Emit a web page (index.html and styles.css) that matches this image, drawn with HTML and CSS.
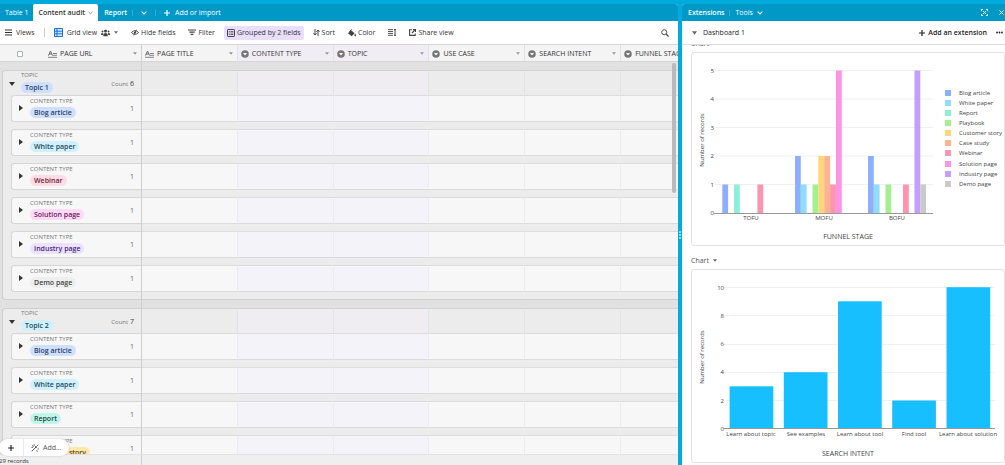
FILE: index.html
```html
<!DOCTYPE html>
<html lang="en">
<head>
    <meta charset="UTF-8">
    <meta name="viewport" content="width=device-width, initial-scale=1.0">
    <title>Content audit</title>
    <link rel="stylesheet" href="styles.css">
</head>
<body>
    <!-- shared icons -->
    <svg class="defs" width="0" height="0">
        <symbol id="i-text" viewBox="0 0 9 8"><path d="M.5 5.500 2.500 1l2 4.500M1.200 4h2.600" fill="none" stroke="#666" stroke-width="1"/><path d="M5 3.500h4M5 5.300h4M0 7.300h9" stroke="#777" stroke-width=".9"/></symbol>
        <symbol id="i-select" viewBox="0 0 8 8"><circle cx="4" cy="4" r="3.800" fill="#777"/><path d="M2 2.900h4L4 5.600z" fill="#fff"/></symbol>
        <symbol id="i-chev" viewBox="0 0 6 4"><path d="m.6.7 2.400 2.300L5.400.7" fill="none" stroke="currentColor" stroke-width="1.100"/></symbol>
        <symbol id="i-caret" viewBox="0 0 6 4"><path d="M0 0h6L3 4z" fill="currentColor"/></symbol>
        <symbol id="i-right" viewBox="0 0 4 6"><path d="M0 0v6l4-3z" fill="currentColor"/></symbol>
        <symbol id="i-plus" viewBox="0 0 6 6"><path d="M3 0v6M0 3h6" stroke="currentColor" stroke-width="1.200"/></symbol>
    </svg>

    <div class="app">
        <main class="base">
            <nav class="tabs">
                <a href="#" class="tab">Table 1</a>
                <a href="#" class="tab active">Content audit <svg class="chev small"><use href="#i-chev"/></svg></a>
                <a href="#" class="tab">Report</a>
                <button class="tab-btn" aria-label="All tables"><svg class="chev"><use href="#i-chev"/></svg></button>
                <button class="tab-btn"><svg class="plus"><use href="#i-plus"/></svg>Add or import</button>
            </nav>

            <div class="toolbar">
                <button class="views"><svg width="7" height="7"><path d="M0 1h7M0 3.500h7M0 6h7" stroke="#333" stroke-width="1.200"/></svg>Views</button>
                <span class="sep"></span>
                <button class="grid-view">
                    <svg width="9" height="9"><path d="M.5.5h8v8h-8zM.5 3.200h8M.5 5.800h8M3 .5v8" fill="#d3e6fb" stroke="#1875dc"/></svg>Grid view
                    <svg class="people" width="9" height="8"><g fill="#444"><circle cx="4.500" cy="2" r="1.500"/><circle cx="1.500" cy="2.600" r="1"/><circle cx="7.500" cy="2.600" r="1"/><path d="M2.300 7.200V5.600q0-1.500 2.200-1.500t2.200 1.500v1.600zM0 6V5q0-1 1.900-.9V6zM9 6V5q0-1-1.900-.9V6z"/></g></svg>
                    <svg class="caret"><use href="#i-caret"/></svg>
                </button>
                <button><svg width="8" height="7"><path d="M.4 3.500Q4-.2 7.600 3.500 4 7.200.4 3.500zM2.500 6.300l3-5.600" fill="none" stroke="#444" stroke-width=".9"/><circle cx="4" cy="3.500" r="1.100" fill="#444"/></svg>Hide fields</button>
                <button><svg width="8" height="7"><path d="M0 1h8M1.300 3.200h5.400M2.600 5.400h2.800" stroke="#444" stroke-width="1.200"/></svg>Filter</button>
                <button class="on"><svg width="8" height="8"><rect x=".5" y=".5" width="7" height="7" rx=".6" fill="none" stroke="#444"/><path d="M1.800 2.500h1M1.800 4h1M1.800 5.500h1M3.500 2.500h2.800M3.500 4h2.800M3.500 5.500h2.800" stroke="#444" stroke-width=".8"/></svg>Grouped by 2 fields</button>
                <button><svg width="7" height="7"><path d="M2 0v6M.3 4.200 2 6l1.700-1.800M5 7V1M3.300 2.800 5 1l1.700 1.800" fill="none" stroke="#444"/></svg>Sort</button>
                <button><svg width="8" height="8"><path d="m3 1.200 3.600 3-3 3L0 4.200z" fill="#444"/><path d="M1.500 2.700 3.700.4" stroke="#444"/><path d="M7.200 4.500q.8 1.300.8 1.900a.8.8 0 0 1-1.600 0q0-.6.8-1.900z" fill="#444"/></svg>Color</button>
                <button aria-label="Row height"><svg width="8" height="7"><path d="M0 .6h5M0 2.500h5M0 4.400h5M0 6.300h5" stroke="#444" stroke-width=".9"/><path d="M7 .5v6M6 .6h2M6 6.300h2" stroke="#444" fill="none"/></svg></button>
                <button><svg width="7" height="7"><path d="M3 .8H.6v5.600h5.600V4.500M4 .6h2.500V3M6.400.6 3 4" fill="none" stroke="#444" stroke-width="1.100"/></svg>Share view</button>
                <button class="search" aria-label="Search"><svg width="8" height="8"><circle cx="3.200" cy="3.200" r="2.500" fill="none" stroke="#555"/><path d="m5 5 2.600 2.600" stroke="#555" stroke-width="1.300"/></svg></button>
            </div>

            <div class="grid">
                <table>
                    <colgroup><col class="c-first"><col><col><col><col><col><col></colgroup>
                    <thead>
                        <tr>
                            <th><div class="head"><input type="checkbox" aria-label="Select all"><svg class="ti"><use href="#i-text"/></svg>PAGE URL<svg class="caret"><use href="#i-caret"/></svg></div></th>
                            <th><div class="head"><svg class="ti"><use href="#i-text"/></svg>PAGE TITLE<svg class="caret"><use href="#i-caret"/></svg></div></th>
                            <th class="tint"><div class="head"><svg class="si"><use href="#i-select"/></svg>CONTENT TYPE<svg class="caret"><use href="#i-caret"/></svg></div></th>
                            <th class="tint"><div class="head"><svg class="si"><use href="#i-select"/></svg>TOPIC<svg class="caret"><use href="#i-caret"/></svg></div></th>
                            <th><div class="head"><svg class="si"><use href="#i-select"/></svg>USE CASE<svg class="caret"><use href="#i-caret"/></svg></div></th>
                            <th><div class="head"><svg class="si"><use href="#i-select"/></svg>SEARCH INTENT<svg class="caret"><use href="#i-caret"/></svg></div></th>
                            <th><div class="head"><svg class="si"><use href="#i-select"/></svg>FUNNEL STAGE</div></th>
                        </tr>
                    </thead>
                    <tbody>
                        <tr class="space"><td></td><td colspan="6"></td></tr>
                        <tr class="topic">
                            <td><div class="group"><svg class="down"><use href="#i-caret"/></svg><div class="name"><small>TOPIC</small><span class="pill blue">Topic 1</span></div><span class="count"><small>Count</small> <b>6</b></span></div></td>
                            <td></td><td class="tint"></td><td class="tint"></td><td></td><td></td><td></td>
                        </tr>
                        <tr class="item">
                            <td><div class="rail"><div class="card"><svg class="right"><use href="#i-right"/></svg><div class="name"><small>CONTENT TYPE</small><span class="pill blue">Blog article</span></div><span class="count">1</span></div></div></td>
                            <td></td><td class="tint"></td><td class="tint"></td><td></td><td></td><td></td>
                        </tr>
                        <tr class="gap"><td><div class="rail"></div></td><td colspan="6"></td></tr>
                        <tr class="item">
                            <td><div class="rail"><div class="card"><svg class="right"><use href="#i-right"/></svg><div class="name"><small>CONTENT TYPE</small><span class="pill cyan">White paper</span></div><span class="count">1</span></div></div></td>
                            <td></td><td class="tint"></td><td class="tint"></td><td></td><td></td><td></td>
                        </tr>
                        <tr class="gap"><td><div class="rail"></div></td><td colspan="6"></td></tr>
                        <tr class="item">
                            <td><div class="rail"><div class="card"><svg class="right"><use href="#i-right"/></svg><div class="name"><small>CONTENT TYPE</small><span class="pill red">Webinar</span></div><span class="count">1</span></div></div></td>
                            <td></td><td class="tint"></td><td class="tint"></td><td></td><td></td><td></td>
                        </tr>
                        <tr class="gap"><td><div class="rail"></div></td><td colspan="6"></td></tr>
                        <tr class="item">
                            <td><div class="rail"><div class="card"><svg class="right"><use href="#i-right"/></svg><div class="name"><small>CONTENT TYPE</small><span class="pill pink">Solution page</span></div><span class="count">1</span></div></div></td>
                            <td></td><td class="tint"></td><td class="tint"></td><td></td><td></td><td></td>
                        </tr>
                        <tr class="gap"><td><div class="rail"></div></td><td colspan="6"></td></tr>
                        <tr class="item">
                            <td><div class="rail"><div class="card"><svg class="right"><use href="#i-right"/></svg><div class="name"><small>CONTENT TYPE</small><span class="pill purple">Industry page</span></div><span class="count">1</span></div></div></td>
                            <td></td><td class="tint"></td><td class="tint"></td><td></td><td></td><td></td>
                        </tr>
                        <tr class="gap"><td><div class="rail"></div></td><td colspan="6"></td></tr>
                        <tr class="item">
                            <td><div class="rail"><div class="card"><svg class="right"><use href="#i-right"/></svg><div class="name"><small>CONTENT TYPE</small><span class="pill gray">Demo page</span></div><span class="count">1</span></div></div></td>
                            <td></td><td class="tint"></td><td class="tint"></td><td></td><td></td><td></td>
                        </tr>
                        <tr class="gap last"><td><div class="rail"></div></td><td colspan="6"></td></tr>
                        <tr class="space"><td></td><td colspan="6"></td></tr>
                        <tr class="topic">
                            <td><div class="group"><svg class="down"><use href="#i-caret"/></svg><div class="name"><small>TOPIC</small><span class="pill cyan">Topic 2</span></div><span class="count"><small>Count</small> <b>7</b></span></div></td>
                            <td></td><td class="tint"></td><td class="tint"></td><td></td><td></td><td></td>
                        </tr>
                        <tr class="item">
                            <td><div class="rail"><div class="card"><svg class="right"><use href="#i-right"/></svg><div class="name"><small>CONTENT TYPE</small><span class="pill blue">Blog article</span></div><span class="count">1</span></div></div></td>
                            <td></td><td class="tint"></td><td class="tint"></td><td></td><td></td><td></td>
                        </tr>
                        <tr class="gap"><td><div class="rail"></div></td><td colspan="6"></td></tr>
                        <tr class="item">
                            <td><div class="rail"><div class="card"><svg class="right"><use href="#i-right"/></svg><div class="name"><small>CONTENT TYPE</small><span class="pill cyan">White paper</span></div><span class="count">1</span></div></div></td>
                            <td></td><td class="tint"></td><td class="tint"></td><td></td><td></td><td></td>
                        </tr>
                        <tr class="gap"><td><div class="rail"></div></td><td colspan="6"></td></tr>
                        <tr class="item">
                            <td><div class="rail"><div class="card"><svg class="right"><use href="#i-right"/></svg><div class="name"><small>CONTENT TYPE</small><span class="pill teal">Report</span></div><span class="count">1</span></div></div></td>
                            <td></td><td class="tint"></td><td class="tint"></td><td></td><td></td><td></td>
                        </tr>
                        <tr class="gap"><td><div class="rail"></div></td><td colspan="6"></td></tr>
                        <tr class="item">
                            <td><div class="rail"><div class="card"><svg class="right"><use href="#i-right"/></svg><div class="name"><small>CONTENT TYPE</small><span class="pill yellow">Customer story</span></div><span class="count">1</span></div></div></td>
                            <td></td><td class="tint"></td><td class="tint"></td><td></td><td></td><td></td>
                        </tr>
                    </tbody>
                </table>
                <div class="scrollbar"></div>
            </div>

            <footer class="summary"><span>29 records</span></footer>
            <div class="add-bar">
                <button aria-label="Add record"><svg class="plus"><use href="#i-plus"/></svg></button>
                <button class="add"><svg width="8" height="8"><path d="m.7 7.300 5-5M4.200 2.200l1.500 1.600M1 1.500l1.500 1M3 .3v1.400M5.500 6.500l1.300 1M6.500 5h1.300M7.300.8 6.200 1.900M.5 3.500h1.300" fill="none" stroke="#444" stroke-width=".9"/></svg>Add...</button>
            </div>
        </main>

        <div class="splitter"><span></span></div>

        <aside class="extensions">
            <div class="ext-bar">
                <strong>Extensions</strong>
                <button class="tools">Tools <svg class="chev"><use href="#i-chev"/></svg></button>
                <button class="end" aria-label="Fullscreen"><svg width="7" height="7"><path d="M.5 2V.5H2M5 .5h1.500V2M6.500 5v1.500H5M2 6.500H.5V5" fill="none" stroke="#fff"/><path d="M2 2l3 3M5 2 2 5" stroke="#fff" stroke-width=".9"/></svg></button>
                <button aria-label="Close"><svg width="5" height="5"><path d="m.5.5 4 4M4.500.5l-4 4" stroke="#fff"/></svg></button>
            </div>
            <div class="dash-bar">
                <button class="dash"><svg class="caret"><use href="#i-caret"/></svg>Dashboard 1</button>
                <button class="add-ext"><svg class="plus"><use href="#i-plus"/></svg>Add an extension</button>
                <button aria-label="More"><svg width="7" height="3"><g fill="#222"><circle cx="1" cy="1.500" r=".9"/><circle cx="3.500" cy="1.500" r=".9"/><circle cx="6" cy="1.500" r=".9"/></g></svg></button>
            </div>
            <div class="ext-body">
                <div class="ext-list">
                    <button class="ext-name">Chart <svg class="caret"><use href="#i-caret"/></svg></button>
                    <div class="ext-card">
                        <svg class="chart" width="313" height="192" role="img" aria-label="Records by funnel stage">
                            <path class="line" d="M23 17.500h218M23 46h218M23 74.500h218M23 103h218M23 131.500h218"/>
                            <g class="num"><text x="22" y="20">5</text><text x="22" y="48">4</text><text x="22" y="77">3</text><text x="22" y="105">2</text><text x="22" y="134">1</text><text x="22" y="162">0</text></g>
                            <path class="axis" d="M22 160.500h219"/>
                            <g fill="#8cb0ff"><rect x="30.300" y="131.500" width="5.800" height="28.500"/><rect x="103" y="103" width="5.800" height="57"/><rect x="176" y="103" width="5.800" height="57"/></g>
                            <g fill="#8fdcfc"><rect x="108.800" y="131.500" width="5.800" height="28.500"/><rect x="181.800" y="131.500" width="5.800" height="28.500"/></g>
                            <rect x="42" y="131.500" width="5.800" height="28.500" fill="#8bf0d8"/>
                            <g fill="#a4f08c"><rect x="120.500" y="131.500" width="5.800" height="28.500"/><rect x="193.500" y="131.500" width="5.800" height="28.500"/></g>
                            <rect x="126.300" y="103" width="5.900" height="57" fill="#ffd57a"/>
                            <rect x="132.200" y="103" width="5.900" height="57" fill="#ffb38f"/>
                            <g fill="#ff94b0"><rect x="65.400" y="131.500" width="5.800" height="28.500"/><rect x="138.100" y="131.500" width="5.800" height="28.500"/><rect x="211" y="131.500" width="5.800" height="28.500"/></g>
                            <rect x="144" y="17.500" width="5.800" height="142.500" fill="#ff94e4"/>
                            <rect x="222.500" y="17.500" width="5.800" height="142.500" fill="#c29eff"/>
                            <rect x="228.300" y="131.500" width="5.800" height="28.500" fill="#cacaca"/>
                            <g class="cat"><text x="59" y="167">TOFU</text><text x="132" y="167">MOFU</text><text x="205" y="167">BOFU</text></g>
                            <text class="ylab" transform="translate(12 87) rotate(-90)">Number of records</text>
                            <text class="xlab" x="156" y="186">FUNNEL STAGE</text>
                            <rect x="253" y="37" width="6" height="6" fill="#8cb0ff"/><text x="267" y="42">Blog article</text>
                            <rect x="253" y="47" width="6" height="6" fill="#8fdcfc"/><text x="267" y="52">White paper</text>
                            <rect x="253" y="57" width="6" height="6" fill="#8bf0d8"/><text x="267" y="62">Report</text>
                            <rect x="253" y="67" width="6" height="6" fill="#a4f08c"/><text x="267" y="72">Playbook</text>
                            <rect x="253" y="77" width="6" height="6" fill="#ffd57a"/><text x="267" y="82">Customer story</text>
                            <rect x="253" y="87" width="6" height="6" fill="#ffb38f"/><text x="267" y="92">Case study</text>
                            <rect x="253" y="97" width="6" height="6" fill="#ff94b0"/><text x="267" y="102">Webinar</text>
                            <rect x="253" y="108" width="6" height="6" fill="#ff94e4"/><text x="267" y="113">Solution page</text>
                            <rect x="253" y="118" width="6" height="6" fill="#c29eff"/><text x="267" y="123">Industry page</text>
                            <rect x="253" y="128" width="6" height="6" fill="#cacaca"/><text x="267" y="133">Demo page</text>
                        </svg>
                    </div>
                    <button class="ext-name">Chart <svg class="caret"><use href="#i-caret"/></svg></button>
                    <div class="ext-card">
                        <svg class="chart" width="313" height="192" role="img" aria-label="Records by search intent">
                            <path class="line" d="M32 17.500h271M32 45.500h271M32 74.500h271M32 102.500h271M32 130.500h271"/>
                            <g class="num"><text x="32" y="20">10</text><text x="32" y="48">8</text><text x="32" y="76">6</text><text x="32" y="104">4</text><text x="32" y="133">2</text><text x="32" y="161">0</text></g>
                            <g fill="#18bfff">
                                <rect x="37.600" y="116.300" width="43.700" height="42.700"/>
                                <rect x="91.800" y="102.200" width="43.700" height="56.800"/>
                                <rect x="146" y="31.300" width="43.700" height="127.700"/>
                                <rect x="200.200" y="130.500" width="43.700" height="28.500"/>
                                <rect x="254.500" y="17.200" width="43.700" height="141.800"/>
                            </g>
                            <path class="axis" d="M31 158.500h272"/>
                            <g class="cat"><text x="59" y="166">Learn about topic</text><text x="114" y="166">See examples</text><text x="168" y="166">Learn about tool</text><text x="222" y="166">Find tool</text><text x="276" y="166">Learn about solution</text></g>
                            <text class="ylab" transform="translate(12 87) rotate(-90)">Number of records</text>
                            <text class="xlab" x="156" y="186">SEARCH INTENT</text>
                        </svg>
                    </div>
                </div>
            </div>
        </aside>
    </div>
</body>
</html>
```

FILE: styles.css
```css
* {
    box-sizing: border-box;
}
body {
    margin: 0;
    height: 100vh;
    overflow: hidden;
    background: #00aadd;
    color: #333;
    font-family: "Open Sans", "Noto Sans", sans-serif;
    font-size: 7px;
    line-height: 10px;
}
svg {
    flex: none;
}
.defs {
    position: absolute;
}
button {
    display: flex;
    align-items: center;
    border: none;
    background: none;
    padding: 0;
    color: inherit;
    font: inherit;
    white-space: nowrap;
    cursor: pointer;
}
.app {
    display: flex;
    height: 100vh;
    padding-top: 4px;
}
.base {
    position: relative;
    flex: 1;
    min-width: 0;
    display: flex;
    flex-direction: column;
    background: #fff;
    border-radius: 0 3px 0 0;
    overflow: hidden;
}

/* icons used in several places */
.chev {
    width: 6px;
    height: 4px;
}
.chev.small {
    width: 5px;
    color: #888;
}
.caret {
    width: 4px;
    height: 3px;
    color: #666;
}
.plus {
    width: 6px;
    height: 6px;
}

/* table tabs */
.tabs {
    display: flex;
    height: 17px;
    flex: none;
    background: #0098c7;
    color: #fff;
}
.tab {
    display: flex;
    align-items: center;
    gap: 3px;
    padding: 0 5px 0 6px;
    color: #fff;
    font-weight: 600;
    text-decoration: none;
}
.tab:first-child {
    padding: 0 4px 0 5px;
    font-weight: 400;
}
.tab.active {
    background: #fff;
    color: #333;
    border-radius: 2px 2px 0 0;
}
.tab-btn {
    gap: 5px;
    padding: 0 8px;
}
.tab-btn::before {
    content: "";
    width: 1px;
    height: 6px;
    margin-left: -8px;
    margin-right: 3px;
    background: #33add2;
}

/* view toolbar */
.toolbar {
    display: flex;
    align-items: center;
    gap: 5px;
    height: 23px;
    flex: none;
    padding: 0 5px 0 1px;
}
.toolbar button {
    gap: 2px;
    height: 14px;
    padding: 0 4px;
    border-radius: 2px;
}
.toolbar .views,
.toolbar .grid-view {
    gap: 4px;
}
.toolbar .sep {
    width: 1px;
    height: 9px;
    background: #ccc;
}
.toolbar .on {
    padding: 0 3px;
    background: #e9dffc;
}
.toolbar .search {
    margin-left: auto;
}

/* grid */
.grid {
    position: relative;
    flex: 1;
    min-height: 0;
    overflow: hidden;
    background: #e1e1e1;
    border-top: 1px solid #d6d6d6;
}
table {
    width: 717px;
    table-layout: fixed;
    border-spacing: 0;
}
.c-first {
    width: 142px;
}
th,
td {
    padding: 0;
    vertical-align: top;
}
th {
    height: 17px;
    background: #f4f4f4;
    border-right: 1px solid #e2e2e2;
    border-bottom: 1px solid #d6d6d6;
    font-weight: 400;
}
th.tint {
    background: #f0eef4;
}
.head {
    display: flex;
    align-items: center;
    height: 16px;
    padding: 1px 4px 0 3px;
    gap: 3px;
    white-space: nowrap;
}
.head .caret {
    margin-left: auto;
    color: #999;
}
.head input {
    appearance: none;
    width: 6px;
    height: 6px;
    margin: 0 22px 0 14px;
    border: 1px solid #aab4b8;
    border-radius: 1px;
    background: #fff;
}
.ti {
    width: 9px;
    height: 8px;
}
.si {
    width: 8px;
    height: 8px;
}
th:first-child,
td:first-child {
    border-right: 1px solid #cfcfcf;
}
.space td {
    height: 8px;
}
.topic td {
    height: 25px;
    background: #ececec;
    border-top: 1px solid #d2d2d2;
    border-right: 1px solid #e3e3e3;
}
.topic .tint {
    background: #efedf2;
}
.item td {
    height: 27px;
    background: #f7f7f7;
    border: 1px solid #dcdcdc;
    border-width: 1px 0;
    border-right: 1px solid #ececec;
}
.item .tint {
    background: #f5f3fa;
}
.gap td {
    height: 7px;
    background: #ececec;
}
.topic td:first-child,
.item td:first-child,
.gap td:first-child {
    padding-left: 2px;
    border-top: none;
    border-bottom: none;
    border-right: 1px solid #cfcfcf;
    background: #e1e1e1;
}
.gap.last td {
    height: 8px;
    border-bottom: 1px solid #cfcfcf;
}
.gap.last td:first-child {
    border-bottom: none;
}
.rail {
    height: 7px;
    padding-left: 8px;
    background: #ececec;
    border-left: 1px solid #cfcfcf;
}
.item .rail {
    height: 27px;
}
.last .rail {
    height: 8px;
    border-bottom: 1px solid #cfcfcf;
    border-bottom-left-radius: 3px;
}
.group,
.card {
    display: flex;
    align-items: flex-start;
    padding-right: 7px;
}
.group {
    height: 25px;
    background: #ececec;
    border: 1px solid #cfcfcf;
    border-width: 1px 0 0 1px;
    border-top-left-radius: 3px;
    padding-left: 6px;
}
.card {
    height: 27px;
    background: #f7f7f7;
    border: 1px solid #d6d6d6;
    border-right: none;
    border-radius: 3px 0 0 3px;
    padding-left: 7px;
}
.down {
    width: 6px;
    height: 4px;
    margin: 11px 6px 0 0;
}
.right {
    width: 4px;
    height: 6px;
    margin: 9px 7px 0 0;
}
.name {
    display: flex;
    flex-direction: column;
    align-items: flex-start;
    gap: 3px;
}
small {
    color: #777;
    font-size: 6px;
    line-height: 8px;
}
.card .name {
    padding-top: 1px;
    gap: 2px;
}
.pill {
    height: 11px;
    padding: 0 4px;
    border-radius: 6px;
    font-weight: 600;
    line-height: 12px;
    white-space: nowrap;
}
.blue { background: #cfdfff; color: #2c3c66; }
.cyan { background: #d0f0fd; color: #1f4a5c; }
.teal { background: #c2f5e9; color: #17493e; }
.yellow { background: #ffe8ad; color: #5c430c; }
.red { background: #ffdce5; color: #6b2439; }
.pink { background: #ffdaf6; color: #66205a; }
.purple { background: #ede2fe; color: #452a75; }
.gray { background: #eee; color: #444; }
.count {
    margin-left: auto;
    padding-top: 8px;
    color: #666;
}
.count b {
    color: #444;
    font-weight: 400;
}
.scrollbar {
    position: absolute;
    top: 18px;
    right: 2px;
    width: 4px;
    height: 130px;
    border-radius: 2px;
    background: #bababa;
}
.summary {
    display: flex;
    flex: none;
    height: 11px;
    background: #efefef;
    border-top: 1px solid #e2e2e2;
    font-size: 6px;
}
.summary span {
    width: 143px;
    margin-left: -1px;
    border-right: 1px solid #cfcfcf;
    line-height: 12px;
}
.add-bar {
    position: absolute;
    left: -1px;
    bottom: 9px;
    display: flex;
    height: 17px;
    border-radius: 9px;
    background: #fff;
    box-shadow: 0 0 2px #0003;
}
.add-bar button {
    width: 24px;
    justify-content: center;
    color: #222;
}
.add-bar .add {
    width: auto;
    gap: 4px;
    padding: 0 7px;
    border-left: 1px solid #e8e8e8;
    color: #555;
}

.splitter {
    display: flex;
    align-items: center;
    justify-content: center;
    width: 4px;
}
.splitter span {
    height: 8px;
    border-left: 2px dotted #8fdcf5;
}

/* extensions panel */
.extensions {
    display: flex;
    flex-direction: column;
    flex: 0 0 323px;
    min-width: 0;
    background: #fff;
    border-radius: 3px 0 0 0;
    overflow: hidden;
}
.ext-bar {
    display: flex;
    align-items: center;
    flex: none;
    height: 17px;
    padding: 0 1px 0 6px;
    background: #0098c7;
    color: #fff;
}
.ext-bar strong {
    font-weight: 600;
}
.tools {
    gap: 4px;
    margin-left: 4px;
    padding-left: 6px;
    border-left: 1px solid #33add2;
    line-height: 6px;
}
.ext-bar .end {
    margin: 0 11px 0 auto;
}
.dash-bar {
    display: flex;
    align-items: center;
    flex: none;
    height: 24px;
    padding: 0 2px 0 10px;
    border-bottom: 1px solid #ddd;
    color: #222;
}
.dash {
    gap: 6px;
}
.dash .caret {
    width: 5px;
    height: 4px;
}
.add-ext {
    gap: 3px;
    margin: 0 9px 0 auto;
    font-weight: 600;
}
.ext-body {
    flex: 1;
    min-height: 0;
    overflow: hidden;
}
.ext-list {
    margin-top: -16px;
    padding-left: 9px;
}
.ext-name {
    gap: 4px;
    height: 23px;
    padding-top: 6px;
    color: #555;
}
.ext-card {
    border: 1px solid #e2e2e2;
    border-radius: 3px;
    overflow: hidden;
}
.chart {
    display: block;
    font-size: 6px;
    fill: #444;
}
.line {
    stroke: #f0f0f0;
}
.axis {
    stroke: #999;
}
.num {
    text-anchor: end;
}
.cat,
.ylab,
.xlab {
    text-anchor: middle;
}
.xlab {
    font-size: 7px;
}
```
